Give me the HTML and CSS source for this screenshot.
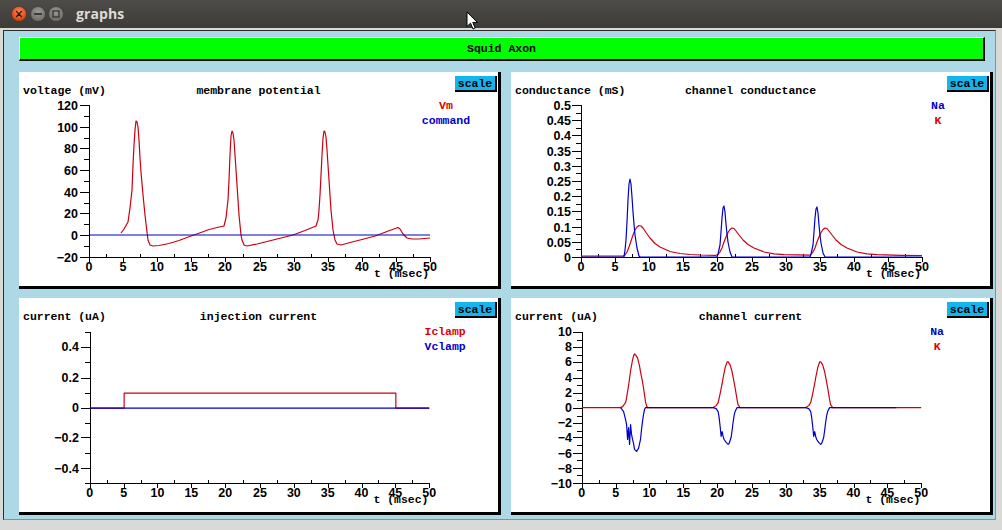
FILE: index.html
```html
<!DOCTYPE html>
<html>
<head>
<meta charset="utf-8">
<title>graphs</title>
<link rel="stylesheet" href="styles.css">
</head>
<body>
<div class="window">
  <div class="titlebar">
    <svg class="wbtn" width="16" height="16" viewBox="0 0 16 16">
      <defs>
        <radialGradient id="gc" cx="50%" cy="35%" r="65%"><stop offset="0" stop-color="#f78a5c"/><stop offset="0.6" stop-color="#e8582a"/><stop offset="1" stop-color="#b8400f"/></radialGradient>
        <radialGradient id="gg" cx="50%" cy="35%" r="65%"><stop offset="0" stop-color="#9c9a95"/><stop offset="1" stop-color="#6a6964"/></radialGradient>
      </defs>
      <circle cx="8" cy="8" r="7.5" fill="url(#gc)" stroke="#5a2a12" stroke-width="0.6"/>
      <path d="M5.6 5.6 L10.4 10.4 M10.4 5.6 L5.6 10.4" stroke="#3b1a0b" stroke-width="1.4" stroke-linecap="round"/>
    </svg>
    <svg class="wbtn" width="16" height="16" viewBox="0 0 16 16">
      <circle cx="8" cy="8" r="7.5" fill="url(#gg)" stroke="#333" stroke-width="0.6"/>
      <path d="M4.8 8 H11.2" stroke="#3a3935" stroke-width="1.8" stroke-linecap="round"/>
    </svg>
    <svg class="wbtn" width="16" height="16" viewBox="0 0 16 16">
      <circle cx="8" cy="8" r="7.5" fill="url(#gg)" stroke="#333" stroke-width="0.6"/>
      <rect x="5" y="5" width="6" height="6" fill="none" stroke="#3a3935" stroke-width="1.4"/>
    </svg>
    <span class="wtitle">graphs</span>
  </div>
  <div class="client">
    <div class="banner">Squid Axon</div>
    <div class="grid">
      <!-- top-left -->
      <div class="panel">
        <div class="phead">
          <span class="ylab">voltage (mV)</span>
          <span class="ptitle">membrane potential</span>
          <button class="scale">scale</button>
        </div>
        <svg class="plot" width="479" height="186" viewBox="0 0 479 186">
          <text class="leg red" x="427" y="8.5">Vm</text>
          <text class="leg blue" x="427" y="23.5">command</text>
          <path class="axis" d="M70.5 5 V157.5 H411"/>
          <path class="axis" d="M61 5.5H70 M65 16.5H70 M61 27.5H70 M65 38.5H70 M61 48.5H70 M65 59.5H70 M61 70.5H70 M65 81.5H70 M61 92.5H70 M65 103.5H70 M61 113.5H70 M65 124.5H70 M61 135.5H70 M65 146.5H70 M61 157.5H70"/>
          <path class="axis" d="M70.5 157V162 M104.5 157V162 M138.5 157V162 M172.5 157V162 M206.5 157V162 M241.5 157V162 M275.5 157V162 M309.5 157V162 M343.5 157V162 M377.5 157V162 M411.5 157V162 M87.5 154V157 M121.5 154V157 M155.5 154V157 M189.5 154V157 M224.5 154V157 M258.5 154V157 M292.5 154V157 M326.5 154V157 M360.5 154V157 M394.5 154V157"/>
          <g class="ytl">
            <text x="59" y="9.5">120</text><text x="59" y="31.5">100</text><text x="59" y="52.5">80</text><text x="59" y="74.5">60</text><text x="59" y="96.5">40</text><text x="59" y="117.5">20</text><text x="59" y="139.5">0</text><text x="59" y="161.5">−20</text>
          </g>
          <g class="xtl">
            <text x="70" y="170.5">0</text><text x="104" y="170.5">5</text><text x="138" y="170.5">10</text><text x="172" y="170.5">15</text><text x="206" y="170.5">20</text><text x="241" y="170.5">25</text><text x="275" y="170.5">30</text><text x="309" y="170.5">35</text><text x="343" y="170.5">40</text><text x="377" y="170.5">45</text><text x="411" y="170.5">50</text>
          </g>
          <text class="xlab" x="355" y="177">t (msec)</text>
          <polyline class="cr" points="102,133 105,129 109,122 111,108 113,90 114,65 115,45 116,30 117,21 118,22 119,27 120,40 121,58 122,72 124,95 126,115 128,132 129,140 131,145 134,146 140,145.5 150,143.5 160,140.5 172,136 182,132.5 190,129.5 198,127.5 205,126 207,118 209,100 210,80 211,55 212,36 213,31 214,33 215,40 216,55 218,85 220,115 222,135 223,140 225,145 228,146 238,144 250,141 262,138 274,135 286,130.5 297,126 299,120 300,110 301,95 302,75 303,55 304,38 305,31 306,32 307,37 308,50 310,80 312,110 314,130 316,140 318,144 322,145 333,142 345,139 356,136 368,131.5 379,127.5 381,129 384,134 388,138 393,139 400,139 411,138"/>
          <polyline class="cb" points="70,135 411,135"/>
        </svg>
      </div>
      <!-- top-right -->
      <div class="panel">
        <div class="phead">
          <span class="ylab">conductance (mS)</span>
          <span class="ptitle">channel conductance</span>
          <button class="scale">scale</button>
        </div>
        <svg class="plot" width="479" height="186" viewBox="0 0 479 186">
          <text class="leg blue" x="427" y="8.5">Na</text>
          <text class="leg red" x="427" y="23.5">K</text>
          <path class="axis" d="M70.5 5 V157.5 H411"/>
          <path class="axis" d="M61 5.5H70 M65 13.5H70 M61 20.5H70 M65 28.5H70 M61 35.5H70 M65 43.5H70 M61 51.5H70 M65 58.5H70 M61 66.5H70 M65 73.5H70 M61 81.5H70 M65 89.5H70 M61 96.5H70 M65 104.5H70 M61 111.5H70 M65 119.5H70 M61 127.5H70 M65 134.5H70 M61 142.5H70 M65 149.5H70 M61 157.5H70"/>
          <path class="axis" d="M70.5 157V162 M104.5 157V162 M138.5 157V162 M172.5 157V162 M206.5 157V162 M241.5 157V162 M275.5 157V162 M309.5 157V162 M343.5 157V162 M377.5 157V162 M411.5 157V162 M87.5 154V157 M121.5 154V157 M155.5 154V157 M189.5 154V157 M224.5 154V157 M258.5 154V157 M292.5 154V157 M326.5 154V157 M360.5 154V157 M394.5 154V157"/>
          <g class="ytl">
            <text x="60" y="9.5">0.5</text><text x="60" y="24.5">0.45</text><text x="60" y="39.5">0.4</text><text x="60" y="55.5">0.35</text><text x="60" y="70.5">0.3</text><text x="60" y="85.5">0.25</text><text x="60" y="100.5">0.2</text><text x="60" y="115.5">0.15</text><text x="60" y="131.5">0.1</text><text x="60" y="146.5">0.05</text><text x="60" y="161.5">0</text>
          </g>
          <g class="xtl">
            <text x="70" y="170.5">0</text><text x="104" y="170.5">5</text><text x="138" y="170.5">10</text><text x="172" y="170.5">15</text><text x="206" y="170.5">20</text><text x="241" y="170.5">25</text><text x="275" y="170.5">30</text><text x="309" y="170.5">35</text><text x="343" y="170.5">40</text><text x="377" y="170.5">45</text><text x="411" y="170.5">50</text>
          </g>
          <text class="xlab" x="355" y="177">t (msec)</text>
          <polyline class="cr" points="70,156 112,156 114,155 116,152 118,147 120,141 122,135 124,130 126,127 128,125.5 130,126 132,128 135,132.5 139,138 144,143.5 149,147 159,151.5 169,153.5 179,154.5 189,155 205,155.3 207,154.5 209,152 211,148 213,142 215,137 217,132.5 219,129.5 221,128 223,128.5 225,131 228,135 232,140 237,144.5 243,148 253,152 263,153.8 273,154.6 298,155.2 300,154.5 302,152 304,148 306,142 308,137 310,132.5 312,129.5 314,128 316,128.5 318,131 321,135 325,140 330,144.5 336,148 346,152 356,153.8 366,154.6 390,155.3 411,155.5"/>
          <polyline class="cb" points="70,157 113,157 114,150 115,140 116,122 117,100 118,84 119,79 120,84 121,97 122,112 123,124 124,135 126,148 128,156 129,157 206,157 207,154 209,145 210,132 211,118 212,108 213,106 214,112 215,124 216,134 217,142 219,152 221,157 299,157 300,154 302,145 303,132 304,118 305,109 306,107 307,113 308,125 309,135 310,143 312,153 314,157 411,157"/>
        </svg>
      </div>
      <!-- bottom-left -->
      <div class="panel">
        <div class="phead">
          <span class="ylab">current (uA)</span>
          <span class="ptitle">injection current</span>
          <button class="scale">scale</button>
        </div>
        <svg class="plot" width="479" height="187" viewBox="0 0 479 187">
          <text class="leg red" x="427" y="9.5">Iclamp</text>
          <text class="leg blue" x="427" y="24.5">Vclamp</text>
          <path class="axis" d="M70.5 6 V158.5 H411"/>
          <path class="axis" d="M65 6.5H70 M61 21.5H70 M65 36.5H70 M61 52.5H70 M65 67.5H70 M61 82.5H70 M65 97.5H70 M61 112.5H70 M65 128.5H70 M61 143.5H70 M65 158.5H70"/>
          <path class="axis" d="M70.5 158V163 M104.5 158V163 M138.5 158V163 M172.5 158V163 M206.5 158V163 M241.5 158V163 M275.5 158V163 M309.5 158V163 M343.5 158V163 M377.5 158V163 M411.5 158V163 M87.5 155V158 M121.5 155V158 M155.5 155V158 M189.5 155V158 M224.5 155V158 M258.5 155V158 M292.5 155V158 M326.5 155V158 M360.5 155V158 M394.5 155V158"/>
          <g class="ytl">
            <text x="59" y="25.5">0.4</text><text x="59" y="56.5">0.2</text><text x="59" y="86.5">0</text><text x="59" y="116.5">−0.2</text><text x="59" y="147.5">−0.4</text>
          </g>
          <g class="xtl">
            <text x="70" y="171.5">0</text><text x="104" y="171.5">5</text><text x="138" y="171.5">10</text><text x="172" y="171.5">15</text><text x="206" y="171.5">20</text><text x="241" y="171.5">25</text><text x="275" y="171.5">30</text><text x="309" y="171.5">35</text><text x="343" y="171.5">40</text><text x="377" y="171.5">45</text><text x="411" y="171.5">50</text>
          </g>
          <text class="xlab" x="355" y="178">t (msec)</text>
          <polyline class="cr" points="70,82.5 104.5,82.5 104.5,67.5 377.5,67.5 377.5,82.5 411,82.5"/>
          <polyline class="cb" points="70,82.5 411,82.5"/>
        </svg>
      </div>
      <!-- bottom-right -->
      <div class="panel">
        <div class="phead">
          <span class="ylab">current (uA)</span>
          <span class="ptitle">channel current</span>
          <button class="scale">scale</button>
        </div>
        <svg class="plot" width="479" height="187" viewBox="0 0 479 187">
          <text class="leg blue" x="427" y="9.5">Na</text>
          <text class="leg red" x="427" y="24.5">K</text>
          <path class="axis" d="M70.5 6 V158.5 H411"/>
          <path class="axis" d="M61 6.5H70 M65 14.5H70 M61 21.5H70 M65 29.5H70 M61 36.5H70 M65 44.5H70 M61 52.5H70 M65 59.5H70 M61 67.5H70 M65 74.5H70 M61 82.5H70 M65 90.5H70 M61 97.5H70 M65 105.5H70 M61 112.5H70 M65 120.5H70 M61 128.5H70 M65 135.5H70 M61 143.5H70 M65 150.5H70 M61 158.5H70"/>
          <path class="axis" d="M70.5 158V163 M104.5 158V163 M138.5 158V163 M172.5 158V163 M206.5 158V163 M241.5 158V163 M275.5 158V163 M309.5 158V163 M343.5 158V163 M377.5 158V163 M411.5 158V163 M87.5 155V158 M121.5 155V158 M155.5 155V158 M189.5 155V158 M224.5 155V158 M258.5 155V158 M292.5 155V158 M326.5 155V158 M360.5 155V158 M394.5 155V158"/>
          <g class="ytl">
            <text x="60" y="10.5">10</text><text x="60" y="25.5">8</text><text x="60" y="40.5">6</text><text x="60" y="56.5">4</text><text x="60" y="71.5">2</text><text x="60" y="86.5">0</text><text x="60" y="101.5">−2</text><text x="60" y="116.5">−4</text><text x="60" y="132.5">−6</text><text x="60" y="147.5">−8</text><text x="60" y="162.5">−10</text>
          </g>
          <g class="xtl">
            <text x="70" y="171.5">0</text><text x="104" y="171.5">5</text><text x="138" y="171.5">10</text><text x="172" y="171.5">15</text><text x="206" y="171.5">20</text><text x="241" y="171.5">25</text><text x="275" y="171.5">30</text><text x="309" y="171.5">35</text><text x="343" y="171.5">40</text><text x="377" y="171.5">45</text><text x="411" y="171.5">50</text>
          </g>
          <text class="xlab" x="355" y="178">t (msec)</text>
          <polyline class="cr" points="70,82 109,82 111,81 114,77 115,72 117,60 119,45 121,34 122,30 123,28 124,29 126,32 128,40 129,46 131,56 132,62 134,76 135,80 136,82 202,82 205,80 207,77 209,68 211,58 212,52 214,42 216,36 217,36 219,39 221,46 222,51 224,62 226,74 227,79 229,82 295,82 298,80 300,77 302,68 304,58 305,52 307,42 309,36 310,36 312,39 314,46 315,51 317,62 319,74 320,79 322,82 411,82"/>
          <polyline class="cb" points="109,82 112,86 114,94 115,99 116,114 117,102 118,119 119,99 120,109 121,114 122,118 123,124 125,126 127,123 129,114 130,104 131,96 132,89 133,84 134,82 202,82 205,83 207,86 208,92 209,101 210,111 211,106 212,111 213,114 215,117 217,119 218,118 220,112 221,105 222,97 223,90 224,86 226,82 295,82 298,83 300,86 301,92 302,101 303,111 304,106 305,111 306,114 308,117 310,119 311,118 313,112 314,105 315,97 316,90 317,86 319,82 386,82"/>
        </svg>
      </div>
    </div>
  </div>
  <svg class="cursor" width="13" height="20" viewBox="0 0 13 20">
    <path d="M1 1 L1 15.5 L4.5 12.2 L7 18 L9.2 17 L6.8 11.4 L11.5 11.4 Z" fill="#fff" stroke="#000" stroke-width="1" stroke-linejoin="round"/>
  </svg>
</div>
</body>
</html>
```
FILE: styles.css
```css
html, body {
  margin: 0;
  padding: 0;
}
body {
  width: 1002px;
  height: 530px;
  overflow: hidden;
  background: #d9d9d7;
  font-family: "Liberation Mono", "DejaVu Sans Mono", monospace;
}
.window {
  position: relative;
  width: 1002px;
  height: 530px;
}
.titlebar {
  height: 28px;
  background: linear-gradient(#4d4c48, #3c3b37);
  display: flex;
  align-items: center;
  padding-left: 11px;
  box-sizing: border-box;
}
.wbtn {
  display: block;
  margin-right: 2px;
}
.wbtn:first-child {
  margin-right: 3px;
}
.wtitle {
  margin-left: 10px;
  color: #dfdbd2;
  font: bold 14px "Open Sans", "DejaVu Sans", sans-serif;
  letter-spacing: 0.1px;
  margin-top: -1px;
}
.client {
  box-sizing: border-box;
  margin: 2px 0 0 3px;
  width: 993px;
  height: 490px;
  border-top: 1px solid #2d2d2d;
  border-left: 1px solid #2d2d2d;
  border-right: 1px solid #8e8e8c;
  border-bottom: 1px solid #8e8e8c;
  background: #add8e6;
  padding: 6px 1px 0 15px;
}
.banner {
  box-sizing: border-box;
  width: 966px;
  height: 24px;
  background: #00ff00;
  border-top: 1px solid #ffffff;
  border-left: 1px solid #ffffff;
  border-right: 2px solid #000;
  border-bottom: 2px solid #000;
  font-weight: bold;
  font-size: 11.5px;
  line-height: 21px;
  text-align: center;
  color: #000;
  margin-bottom: 11px;
}
.grid {
  display: grid;
  grid-template-columns: 482px 482px;
  grid-template-rows: 217px 217px;
  column-gap: 10px;
  row-gap: 9px;
}
.panel {
  box-sizing: border-box;
  background: #fff;
  border-right: 3px solid #000;
  border-bottom: 3px solid #000;
  display: flex;
  flex-direction: column;
}
.phead {
  height: 28px;
  display: grid;
  grid-template-columns: 1fr auto 1fr;
  align-items: start;
  font-weight: bold;
  font-size: 11.5px;
  line-height: 14px;
  color: #000;
}
.ylab {
  margin-top: 12px;
  padding-left: 4px;
  white-space: pre;
}
.ptitle {
  margin-top: 12px;
  white-space: pre;
}
.scale {
  justify-self: end;
  margin: 4px 1px 0 0;
  padding: 0;
  box-sizing: border-box;
  width: 42px;
  height: 16px;
  background: #14b4ec;
  border: none;
  border-right: 2px solid #000;
  border-bottom: 2px solid #000;
  font-family: "Liberation Mono", monospace;
  font-weight: bold;
  font-size: 11.5px;
  line-height: 13px;
  color: #000;
  text-align: center;
}
.plot {
  display: block;
}
.axis {
  fill: none;
  stroke: #000;
  stroke-width: 1;
  shape-rendering: crispEdges;
}
.cr, .cb {
  fill: none;
  stroke-width: 1.2;
  stroke-linejoin: round;
}
.cr { stroke: #cc0010; }
.cb { stroke: #0000c8; }
.leg {
  font-family: "Liberation Mono", monospace;
  font-weight: bold;
  font-size: 11.5px;
  text-anchor: middle;
}
.red { fill: #dd0000; }
.blue { fill: #0000cc; }
.ytl text {
  font-family: "Liberation Sans", Arial, sans-serif;
  font-weight: bold;
  font-size: 12.5px;
  text-anchor: end;
  fill: #000;
}
.xtl text {
  font-family: "Liberation Sans", Arial, sans-serif;
  font-weight: bold;
  font-size: 12.5px;
  text-anchor: middle;
  fill: #000;
}
.xlab {
  font-family: "Liberation Mono", monospace;
  font-weight: bold;
  font-size: 11.5px;
  fill: #000;
}
.cursor {
  position: absolute;
  left: 466px;
  top: 11px;
}
```
